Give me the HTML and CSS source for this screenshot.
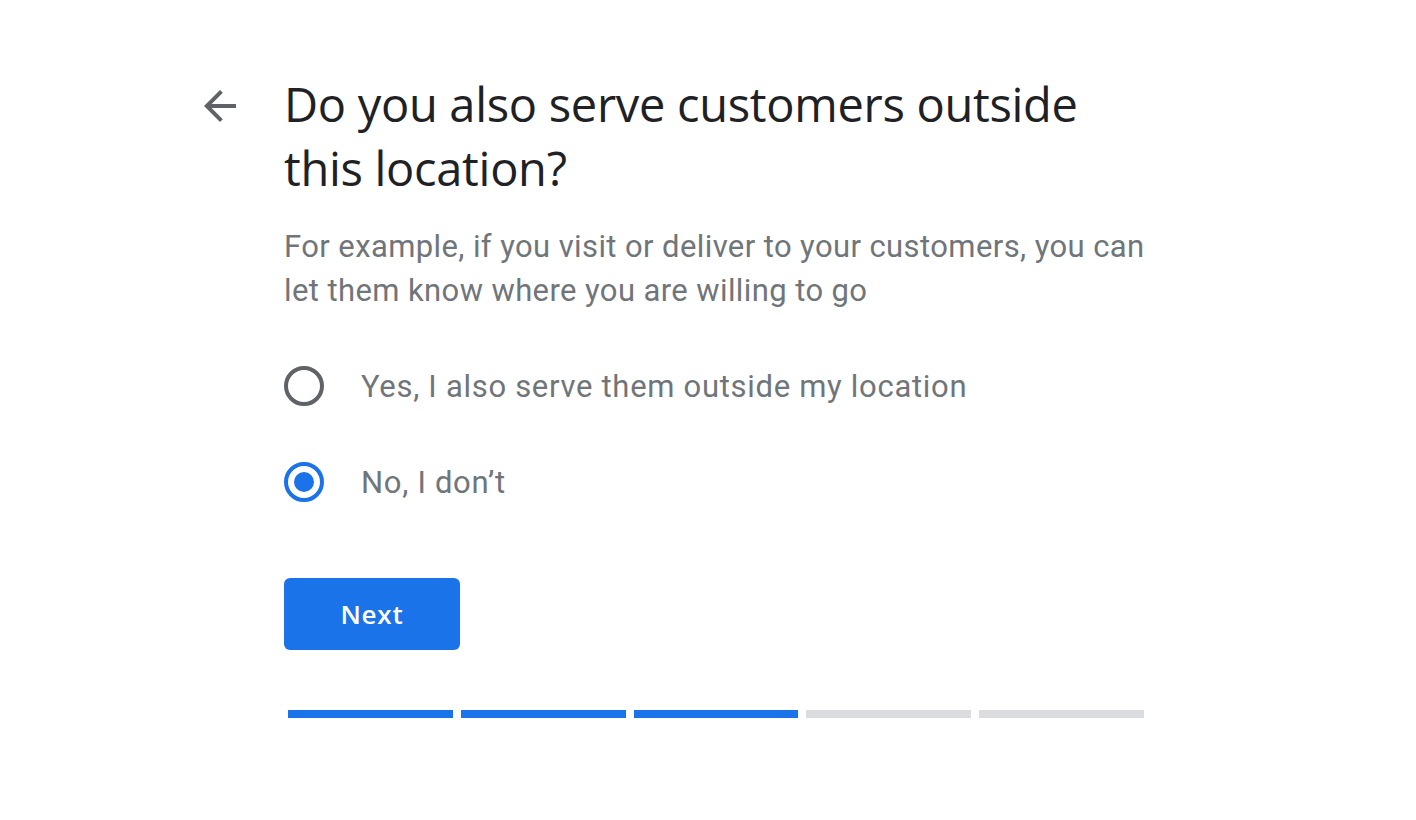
FILE: index.html
```html
<!DOCTYPE html>
<html lang="en">
<head>
<meta charset="utf-8">
<title>Service area</title>
<link rel="stylesheet" href="styles.css">
</head>
<body>
<main class="page">
  <button class="back" aria-label="Back">
    <svg viewBox="0 0 24 24" width="48" height="48"><path d="M20 11H7.83l5.59-5.59L12 4l-8 8 8 8 1.41-1.41L7.83 13H20v-2z" fill="#5f6368"/></svg>
  </button>
  <section class="content">
    <h1 class="title">Do you also serve customers outside this location?</h1>
    <p class="desc">For example, if you visit or deliver to your customers, you can let them know where you are willing to go</p>
    <div class="options">
      <label class="option">
        <span class="radio"></span>
        <span class="label">Yes, I also serve them outside my location</span>
      </label>
      <label class="option">
        <span class="radio checked"><span class="dot"></span></span>
        <span class="label">No, I don’t</span>
      </label>
    </div>
    <button class="next">Next</button>
    <div class="progress">
      <span class="seg done"></span>
      <span class="seg done"></span>
      <span class="seg done"></span>
      <span class="seg"></span>
      <span class="seg"></span>
    </div>
  </section>
</main>
</body>
</html>
```

FILE: styles.css
```css
html, body {
  margin: 0;
  padding: 0;
  background: #ffffff;
}
body {
  font-family: Roboto, "Liberation Sans", sans-serif;
}
.page {
  display: flex;
  align-items: flex-start;
  padding: 72px 0 0 196px;
}
.back {
  width: 48px;
  height: 48px;
  padding: 0;
  margin-top: 10px;
  border: none;
  background: none;
  display: block;
}
.back svg {
  display: block;
}
.content {
  margin-left: 40px;
  width: 864px;
}
.title {
  margin: 0;
  font-family: "Open Sans", Roboto, sans-serif;
  font-weight: 400;
  font-size: 47px;
  line-height: 64px;
  color: #202124;
  letter-spacing: -0.3px;
  width: 840px;
}
.desc {
  margin: 25px 0 0;
  font-size: 31px;
  line-height: 44px;
  letter-spacing: 0.4px;
  color: #70757a;
  width: 880px;
}
.options {
  margin-top: 25px;
  display: flex;
  flex-direction: column;
}
.option {
  height: 96px;
  display: flex;
  align-items: center;
}
.radio {
  width: 40px;
  height: 40px;
  box-sizing: border-box;
  border: 4px solid #5f6368;
  border-radius: 50%;
  display: flex;
  align-items: center;
  justify-content: center;
  flex: none;
}
.radio.checked {
  border-color: #1a73e8;
}
.dot {
  width: 20px;
  height: 20px;
  border-radius: 50%;
  background: #1a73e8;
}
.label {
  margin-left: 37px;
  font-size: 31px;
  letter-spacing: 0.7px;
  color: #70757a;
}
.next {
  margin-top: 48px;
  width: 176px;
  height: 72px;
  border: none;
  border-radius: 6px;
  background: #1a73e8;
  color: #ffffff;
  font-family: "Open Sans", Roboto, sans-serif;
  font-weight: 600;
  font-size: 26px;
  letter-spacing: 0.8px;
  display: block;
}
.progress {
  margin-top: 60px;
  padding: 0 4px;
  display: flex;
  gap: 8px;
}
.seg {
  flex: 1;
  height: 8px;
  background: #dadce0;
}
.seg.done {
  background: #1a73e8;
}
```
